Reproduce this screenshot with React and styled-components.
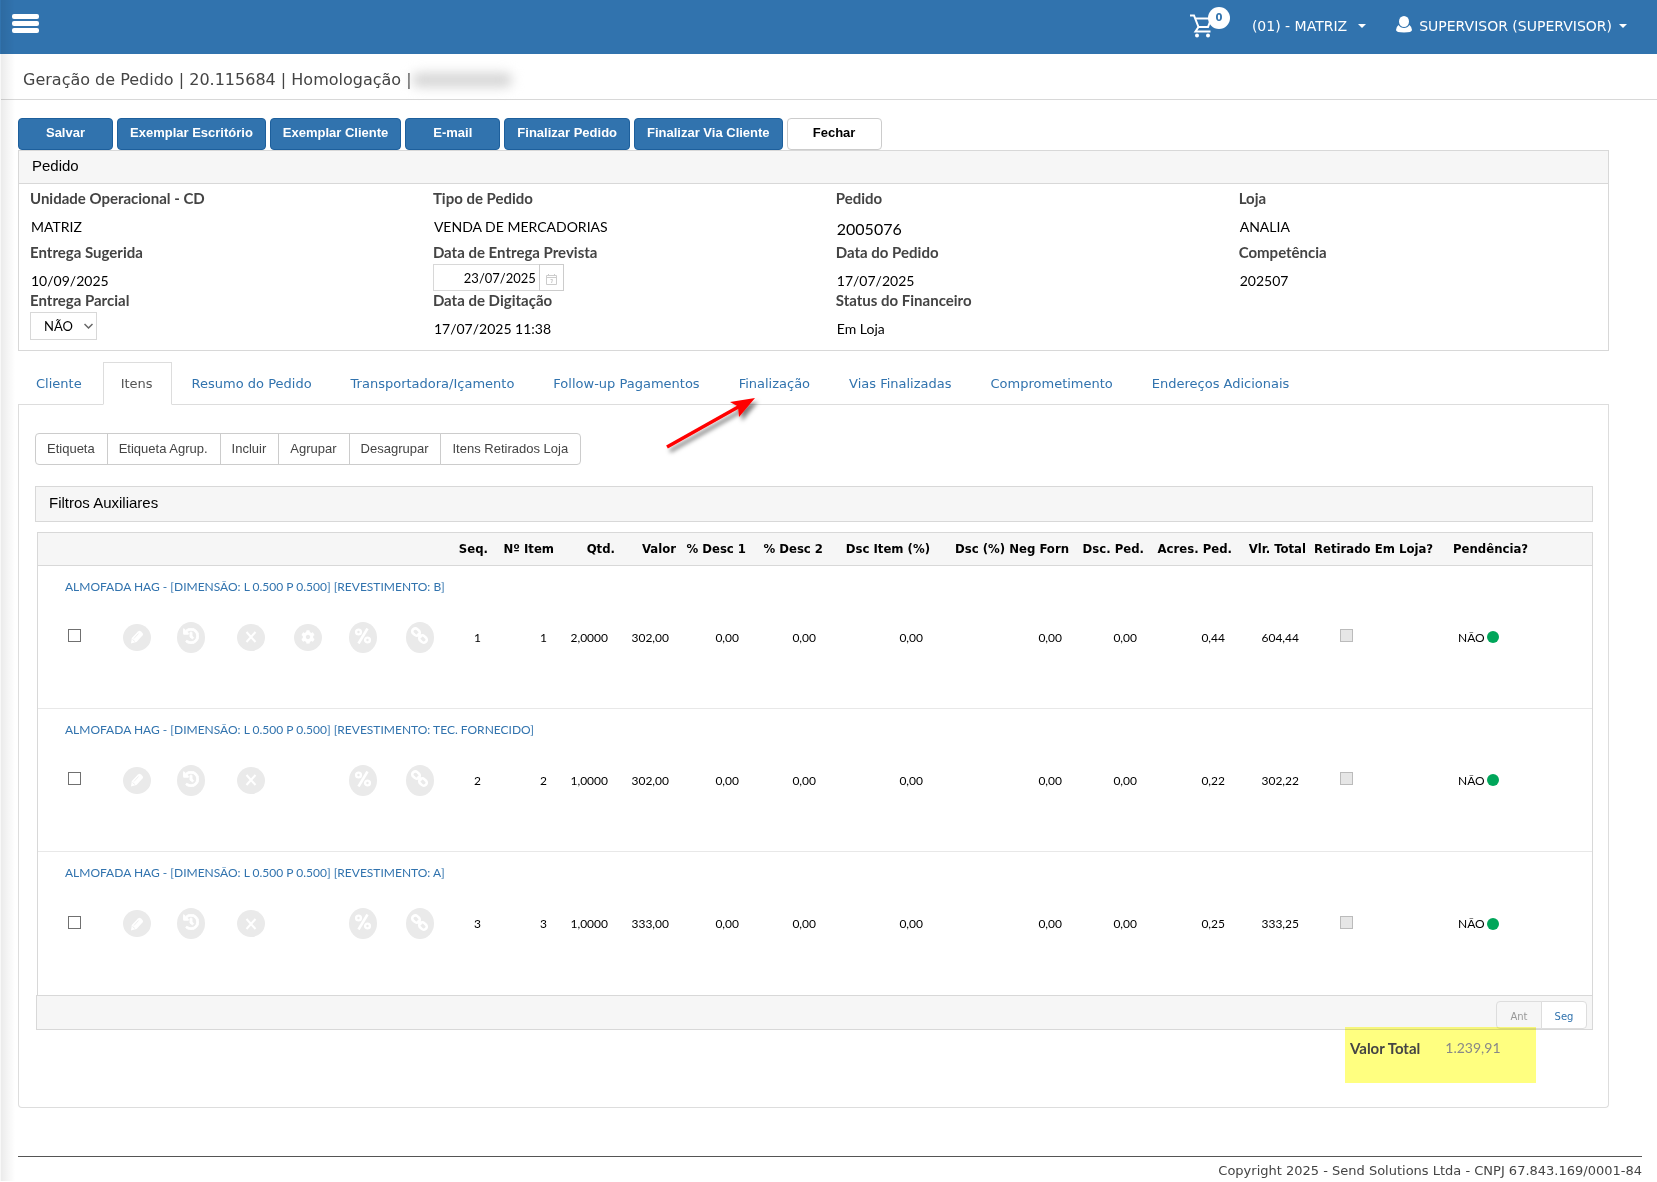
import React from 'react';
import styled, { createGlobalStyle } from 'styled-components';
import { FaHistory, FaCog } from 'react-icons/fa';

const VERDANA = '"DejaVu Sans", Verdana, sans-serif';
const TAHOMA = '"DejaVu Sans Condensed", Tahoma, sans-serif';
const ARIAL = '"Liberation Sans", Arial, sans-serif';
const TREBUCHET = 'Lato, "Trebuchet MS", sans-serif';

const GlobalStyle = createGlobalStyle`
    * {
        box-sizing: border-box;
    }
    body {
        margin: 0;
        background: #fff;
        color: #444;
        font-family: ${VERDANA};
        font-size: 13px;
    }
    button, input, select {
        font: inherit;
        margin: 0;
    }
    a {
        color: #3173ae;
        text-decoration: none;
    }
`;

const Page = styled.div`
    position: relative;
    border-left: 1px solid #f8f8f8;
`;

const SideShadow = styled.div`
    position: absolute;
    top: 0;
    bottom: 0;
    left: 0;
    width: 14px;
    background: linear-gradient(to right, rgba(0, 0, 0, 0.08), rgba(0, 0, 0, 0));
    pointer-events: none;
`;

const TopBar = styled.header`
    display: flex;
    align-items: center;
    justify-content: space-between;
    height: 54px;
    margin-left: -1px;
    padding: 0 30px 2px 12px;
    background: #3173ae;
    color: #fff;
    font-size: 14px;
`;

const MenuButton = styled.button`
    display: grid;
    gap: 2px;
    margin-bottom: 6px;
    padding: 0;
    border: 0;
    background: none;
`;

const MenuBar = styled.span`
    width: 27px;
    height: 5px;
    border-radius: 2px;
    background: #fff;
`;

const TopActions = styled.div`
    display: flex;
    align-items: center;
`;

const CartButton = styled.button`
    position: relative;
    height: 24px;
    margin-right: 40px;
    padding: 0;
    border: 0;
    background: none;
    color: #fff;
`;

const CartBadge = styled.span`
    position: absolute;
    top: -7px;
    left: 18px;
    width: 22px;
    height: 22px;
    border-radius: 50%;
    background: #fff;
    color: #3173ae;
    font-size: 10px;
    font-weight: bold;
    line-height: 21px;
    text-align: center;
`;

const TopMenu = styled.button`
    display: flex;
    align-items: center;
    gap: ${props => props.$gap};
    margin-right: ${props => props.$after ?? 0};
    padding: 0;
    border: 0;
    background: none;
    color: #fff;
`;

const Caret = styled.span`
    border: 4px solid transparent;
    border-top-color: #fff;
    border-bottom: 0;
`;

const TitleBar = styled.div`
    padding: 17px 23px 10px 22px;
    border-bottom: 1px solid #d8d8d8;
`;

const Title = styled.h1`
    display: flex;
    align-items: center;
    margin: 0;
    font-size: 16px;
    font-weight: normal;
    line-height: 18px;
`;

const Redacted = styled.span`
    width: 100px;
    height: 14px;
    border-radius: 6px;
    background: #d4d4d4;
    filter: blur(6px);
`;

const Main = styled.main`
    padding: 18px 48px 0 17px;
`;

const Toolbar = styled.div`
    display: flex;
    gap: 4px;
`;

const ActionButton = styled.button`
    min-width: 95px;
    height: 32px;
    padding: 0 12px 3px;
    border: 1px solid ${props => (props.$plain ? '#ccc' : '#1d5f9c')};
    border-radius: 4px;
    background: ${props => (props.$plain ? '#fff' : '#3173ae')};
    color: ${props => (props.$plain ? '#000' : '#fff')};
    font-family: ${ARIAL};
    font-weight: bold;
`;

const Panel = styled.section`
    border: 1px solid #d8d8d8;
`;

const PanelTitle = styled.h2`
    margin: 0;
    padding: 0 13px 2px;
    background: #f6f6f6;
    color: #000;
    font-family: ${ARIAL};
    font-size: 15px;
    font-weight: normal;
    line-height: 30px;
`;

const Fields = styled.div`
    display: grid;
    grid-template-columns: 12fr 12fr 12fr 11fr;
    grid-template-rows: 54px 48px 48px;
    padding: 4px 0 12px 11px;
    border-top: 1px solid #d8d8d8;
    font-family: ${TREBUCHET};
    font-size: 15px;
`;

const FieldLabel = styled.label`
    display: block;
    font-weight: bold;
    line-height: 20px;
`;

const FieldValue = styled.span`
    display: block;
    padding: 8px 1px 0;
    color: #000;
    font-size: ${props => (props.$big ? '16px' : '14px')};
    line-height: ${props => (props.$big ? '26px' : '22px')};
`;

const ControlGroup = styled.div`
    display: flex;
    height: 29px;
    padding-top: 2px;
`;

const DateInput = styled.input`
    width: 106px;
    padding: 0 3px;
    border: 1px solid #d8d8d8;
    border-right: 0;
    color: #000;
    font-size: 13px;
    text-align: right;
`;

const DateButton = styled.button`
    display: grid;
    place-items: center;
    width: 25px;
    padding: 4px 0 0;
    border: 1px solid #ccc;
    background: #fff;
`;

const SelectBox = styled.div`
    position: relative;
    width: 67px;
    height: 30px;
    padding-top: 2px;

    svg {
        position: absolute;
        top: 12px;
        right: 4px;
        pointer-events: none;
    }
`;

const Select = styled.select`
    appearance: none;
    width: 100%;
    height: 100%;
    padding: 0 13px;
    border: 1px solid #d8d8d8;
    border-radius: 0;
    background: #fff;
    color: #000;
    font-size: 13px;
`;

const Tabs = styled.nav`
    display: flex;
    margin-top: 11px;
    border-bottom: 1px solid #ddd;
`;

const Tab = styled.a`
    position: relative;
    height: 43px;
    margin: 0 2px -1px 0;
    padding: 0 18px 0 17px;
    border: 1px solid transparent;
    line-height: 42px;
    white-space: nowrap;
    ${props => props.$active && `
        border-color: #ddd #ddd #fff;
        background: #fff;
        color: #555;
    `}
`;

const Arrow = styled.svg`
    position: absolute;
    top: 29px;
    left: -62px;
    z-index: 1;
    overflow: visible;
`;

const TabContent = styled.section`
    padding: 28px 15px 24px 16px;
    border: 1px solid #ddd;
    border-top: 0;
    border-radius: 0 0 4px 4px;
`;

const ButtonGroup = styled.div`
    display: flex;
    margin-bottom: 21px;
`;

const GroupButton = styled.button`
    height: 32px;
    margin-right: -1px;
    padding: 0 12px 1px 11px;
    border: 1px solid #ccc;
    background: #fff;
    color: #444;
    font-family: ${ARIAL};

    &:first-child {
        border-radius: 4px 0 0 4px;
    }
    &:last-child {
        border-radius: 0 4px 4px 0;
    }
`;

const FilterTitle = styled(PanelTitle)`
    margin-bottom: 10px;
    border: 1px solid #d8d8d8;
    line-height: 32px;
`;

const TableFrame = styled.div`
    margin-left: 2px;
    border: 1px solid #d8d8d8;
    border-bottom: 0;
`;

const Table = styled.table`
    width: 100%;
    table-layout: fixed;
    border-spacing: 0;
    color: #000;
`;

const Col = styled.col`
    width: ${props => props.$width ?? 'auto'};
`;

const HeadCell = styled.th`
    height: 33px;
    padding: 0 0 2px ${props => props.$indent ?? 0};
    border-bottom: 1px solid #d8d8d8;
    background: #f6f6f6;
    font-family: ${TAHOMA};
    font-size: 13px;
    text-align: ${props => (props.$indent ? 'left' : 'right')};
    white-space: nowrap;
`;

const ItemTitleCell = styled.td`
    height: 44px;
    padding: 0 27px 3px;
    font-family: ${TREBUCHET};
    font-size: 12px;
`;

const ItemCell = styled.td`
    height: 99px;
    padding: 0 7px 44px ${props => props.$indent ?? 0};
    border-bottom: 1px solid #e8e8e8;
    font-family: ${TREBUCHET};
    font-size: 12px;
    text-align: ${props => (props.$indent ? 'left' : 'right')};

    tbody tr:last-child > & {
        border-bottom: 0;
    }
`;

const IconCell = styled(ItemCell)`
    padding: 0 1px 44px 0;
    text-align: center;
`;

const CheckBox = styled.input`
    appearance: none;
    display: block;
    width: 13px;
    height: 13px;
    margin-bottom: 3px;
    border: 1px solid #707070;
    background: #fff;

    &:checked {
        background: #3173ae;
    }
    &:disabled {
        border-color: #bbb;
        background: #e6e6e6;
    }
`;

const RoundButton = styled.button`
    display: inline-grid;
    place-items: center;
    width: 28px;
    height: ${props => (props.$tall ? '31px' : '27px')};
    padding: 0 0 ${props => (props.$tall ? '3px' : '0')};
    border: 0;
    border-radius: 50%;
    background: #eaeaea;
    color: #fff;
    vertical-align: middle;
`;

const Status = styled.span`
    display: flex;
    align-items: center;
    gap: 2px;
`;

const Dot = styled.span`
    width: 12px;
    height: 12px;
    border-radius: 50%;
    background: #00a65a;
`;

const Pager = styled.div`
    display: flex;
    justify-content: flex-end;
    height: 35px;
    margin-left: 1px;
    padding: 5px 5px 0;
    border: 1px solid #d8d8d8;
    background: #f6f6f6;
`;

const PageButton = styled.button`
    width: 46px;
    margin-left: -1px;
    padding: 3px 0 0;
    border: 1px solid #ddd;
    background: #fff;
    color: #3173ae;
    font-size: 10px;

    &:first-child {
        border-radius: 4px 0 0 4px;
    }
    &:last-child {
        border-radius: 0 4px 4px 0;
    }
    &:disabled {
        background: #f6f6f6;
        color: #999;
    }
`;

const Total = styled.div`
    display: flex;
    gap: 25px;
    width: 191px;
    height: 56px;
    margin: -3px 57px 0 auto;
    padding: 11px 5px;
    background: #ffff80;
    font-family: ${TREBUCHET};
    font-size: 15px;
    line-height: 20px;
    mix-blend-mode: multiply;
`;

const TotalValue = styled.span`
    color: #888;
    font-size: 14px;
`;

const Footer = styled.footer`
    margin: 48px 15px 0 17px;
    padding-top: 4px;
    border-top: 1px solid #555;
    line-height: 20px;
    text-align: right;
`;

const CartIcon = () => (
    <svg width="22" height="24" viewBox="0 0 22 24" fill="none" stroke="currentColor" strokeWidth="2">
        <path d="M0 1.500h4l4.500 11.500h9.500L21 5" />
        <path d="M5.500 4.500h14" />
        <path d="M8.500 13l-3 4.500h15" />
        <circle cx="7" cy="21.500" r="2" fill="currentColor" stroke="none" />
        <circle cx="18" cy="21.500" r="2" fill="currentColor" stroke="none" />
    </svg>
);

const UserIcon = () => (
    <svg width="16" height="20" viewBox="0 0 16 20" fill="currentColor">
        <ellipse cx="8" cy="5.500" rx="5" ry="5.500" />
        <path d="M2.500 9Q0 11 0 14q0 2.500 8 2.500t8-2.500q0-3-2.500-5-2 3-5.500 3t-5.500-3z" />
    </svg>
);

const CalendarIcon = () => (
    <svg width="11" height="11" viewBox="0 0 11 11" fill="none" stroke="#ccc">
        <path d="M.5 1.500h10v9H.5zM.5 3.500h10M2.500 0v2M8.500 0v2M4.500 5.500h2L5.500 9" />
    </svg>
);

const ChevronIcon = () => (
    <svg width="9" height="8" viewBox="0 0 9 8" fill="none" stroke="#666" strokeWidth="1.500">
        <path d="M.5 2l4 4 4-4" />
    </svg>
);

const PencilIcon = () => (
    <svg width="14" height="14" viewBox="0 0 14 14">
        <path d="M8 1.500Q9.500 .2 11 1.500l1.500 1.500q1.200 1.200 0 2.500L6.500 12 1 13.500 1.800 8z" fill="#fff" />
        <path d="M4 8.500l4.500-5M2.500 9.500l2.500 2" stroke="#eaeaea" fill="none" strokeWidth=".8" />
    </svg>
);

const CloseIcon = () => (
    <svg width="12" height="12" viewBox="0 0 12 12" stroke="#fff" strokeWidth="2">
        <path d="M1.500 1l9 10M10.500 1l-9 10" />
    </svg>
);

const PercentIcon = () => (
    <svg width="16" height="16" viewBox="0 0 16 16" fill="none" stroke="#fff">
        <circle cx="3.500" cy="4" r="2.400" strokeWidth="2.400" />
        <circle cx="12.500" cy="12" r="2.400" strokeWidth="2.400" />
        <path d="M12.500 .5l-9 15" strokeWidth="2.600" />
    </svg>
);

const LinkIcon = () => (
    <svg width="17" height="17" viewBox="0 0 17 17" fill="none" stroke="#fff" strokeWidth="2.600">
        <rect x="1" y="2" width="8" height="6" rx="3" transform="rotate(42 5 5)" />
        <rect x="8" y="9" width="8" height="6" rx="3" transform="rotate(42 12 12)" />
        <path d="M6.500 6.500l4 4" />
    </svg>
);

const fields = [
    { label: 'Unidade Operacional - CD', value: 'MATRIZ' },
    { label: 'Tipo de Pedido', value: 'VENDA DE MERCADORIAS' },
    { label: 'Pedido', value: '2005076', big: true },
    { label: 'Loja', value: 'ANALIA' },
    { label: 'Entrega Sugerida', value: '10/09/2025' },
    { label: 'Data de Entrega Prevista', value: '23/07/2025', type: 'date' },
    { label: 'Data do Pedido', value: '17/07/2025' },
    { label: 'Competência', value: '202507' },
    { label: 'Entrega Parcial', value: 'NÃO', type: 'select' },
    { label: 'Data de Digitação', value: '17/07/2025 11:38' },
    { label: 'Status do Financeiro', value: 'Em Loja' },
];

const actions = ['Salvar', 'Exemplar Escritório', 'Exemplar Cliente', 'E-mail', 'Finalizar Pedido', 'Finalizar Via Cliente'];

const tabs = [
    'Cliente', 'Itens', 'Resumo do Pedido', 'Transportadora/Içamento', 'Follow-up Pagamentos',
    'Finalização', 'Vias Finalizadas', 'Comprometimento', 'Endereços Adicionais',
];

const itemActions = ['Etiqueta', 'Etiqueta Agrup.', 'Incluir', 'Agrupar', 'Desagrupar', 'Itens Retirados Loja'];

const iconWidths = ['72px', '54px', '54px', '67px', '47px', '62px', '52px'];

const columns = [
    { title: 'Seq.', width: '42px' },
    { title: 'Nº Item', width: '66px' },
    { title: 'Qtd.', width: '61px' },
    { title: 'Valor', width: '61px' },
    { title: '% Desc 1', width: '70px' },
    { title: '% Desc 2', width: '77px' },
    { title: 'Dsc Item (%)', width: '107px' },
    { title: 'Dsc (%) Neg Forn', width: '139px' },
    { title: 'Dsc. Ped.', width: '75px' },
    { title: 'Acres. Ped.', width: '88px' },
    { title: 'Vlr. Total', width: '74px' },
    { title: 'Retirado Em Loja?', width: '128px', indent: '8px' },
    { title: 'Pendência?', indent: '19px' },
];

const items = [
    {
        name: 'ALMOFADA HAG - [DIMENSÃO: L 0.500 P 0.500] [REVESTIMENTO: B]',
        configurable: true,
        values: ['1', '1', '2,0000', '302,00', '0,00', '0,00', '0,00', '0,00', '0,00', '0,44', '604,44'],
    },
    {
        name: 'ALMOFADA HAG - [DIMENSÃO: L 0.500 P 0.500] [REVESTIMENTO: TEC. FORNECIDO]',
        values: ['2', '2', '1,0000', '302,00', '0,00', '0,00', '0,00', '0,00', '0,00', '0,22', '302,22'],
    },
    {
        name: 'ALMOFADA HAG - [DIMENSÃO: L 0.500 P 0.500] [REVESTIMENTO: A]',
        values: ['3', '3', '1,0000', '333,00', '0,00', '0,00', '0,00', '0,00', '0,00', '0,25', '333,25'],
    },
];

const Field = ({ field, id }) => {
    if (field.type === 'date') {
        return (
            <div>
                <FieldLabel htmlFor={id}>{field.label}</FieldLabel>
                <ControlGroup>
                    <DateInput id={id} defaultValue={field.value} />
                    <DateButton type="button" aria-label="Calendário"><CalendarIcon /></DateButton>
                </ControlGroup>
            </div>
        );
    }
    if (field.type === 'select') {
        return (
            <div>
                <FieldLabel htmlFor={id}>{field.label}</FieldLabel>
                <SelectBox>
                    <Select id={id} defaultValue={field.value}>
                        <option>NÃO</option>
                        <option>SIM</option>
                    </Select>
                    <ChevronIcon />
                </SelectBox>
            </div>
        );
    }
    return (
        <div>
            <FieldLabel as="span">{field.label}</FieldLabel>
            <FieldValue $big={field.big}>{field.value}</FieldValue>
        </div>
    );
};

const ItemRows = ({ item }) => (
    <>
        <tr>
            <ItemTitleCell colSpan={20}><a href="#item">{item.name}</a></ItemTitleCell>
        </tr>
        <tr>
            <ItemCell $indent="30px"><CheckBox type="checkbox" aria-label="Selecionar item" /></ItemCell>
            <IconCell><RoundButton aria-label="Editar"><PencilIcon /></RoundButton></IconCell>
            <IconCell><RoundButton $tall aria-label="Histórico"><FaHistory size={16} strokeWidth={30} stroke="#fff" /></RoundButton></IconCell>
            <IconCell><RoundButton aria-label="Excluir"><CloseIcon /></RoundButton></IconCell>
            <IconCell>
                {item.configurable && <RoundButton aria-label="Configurar"><FaCog size={14} /></RoundButton>}
            </IconCell>
            <IconCell><RoundButton $tall aria-label="Desconto"><PercentIcon /></RoundButton></IconCell>
            <IconCell><RoundButton $tall aria-label="Vincular"><LinkIcon /></RoundButton></IconCell>
            {item.values.map((value, index) => <ItemCell key={index}>{value}</ItemCell>)}
            <ItemCell $indent="34px"><CheckBox type="checkbox" disabled aria-label="Retirado em loja" /></ItemCell>
            <ItemCell $indent="24px"><Status>NÃO <Dot /></Status></ItemCell>
        </tr>
    </>
);

const ItemsTable = () => (
    <TableFrame>
        <Table>
            <colgroup>
                {iconWidths.map((width, index) => <Col key={index} $width={width} />)}
                {columns.map(column => <Col key={column.title} $width={column.width} />)}
            </colgroup>
            <thead>
                <tr>
                    <HeadCell as="td" colSpan={7} />
                    {columns.map(column => (
                        <HeadCell key={column.title} $indent={column.indent}>{column.title}</HeadCell>
                    ))}
                </tr>
            </thead>
            <tbody>
                {items.map(item => <ItemRows key={item.name} item={item} />)}
            </tbody>
        </Table>
    </TableFrame>
);

const PointerArrow = () => (
    <Arrow width="100" height="60" viewBox="0 0 100 60" aria-hidden="true">
        <defs>
            <filter id="arrow-shadow" x="-20%" y="-20%" width="150%" height="160%">
                <feDropShadow dx="3" dy="4" stdDeviation="2" floodColor="#000" floodOpacity="0.5" />
            </filter>
        </defs>
        <g filter="url(#arrow-shadow)">
            <path d="M7 55L80 14" stroke="#f00" strokeWidth="3.500" />
            <path d="M95 6L70 10l8 4.500L79 25z" fill="#f00" />
        </g>
    </Arrow>
);

const App = () => (
    <Page>
        <GlobalStyle />
        <TopBar>
            <MenuButton aria-label="Menu">
                <MenuBar />
                <MenuBar />
                <MenuBar />
            </MenuButton>
            <TopActions>
                <CartButton aria-label="Carrinho">
                    <CartIcon />
                    <CartBadge>0</CartBadge>
                </CartButton>
                <TopMenu $gap="11px" $after="30px">(01) - MATRIZ <Caret /></TopMenu>
                <TopMenu $gap="7px"><UserIcon /> SUPERVISOR (SUPERVISOR) <Caret /></TopMenu>
            </TopActions>
        </TopBar>
        <TitleBar>
            <Title>Geração de Pedido | 20.115684 | Homologação |<Redacted /></Title>
        </TitleBar>
        <Main>
            <Toolbar>
                {actions.map(action => <ActionButton key={action}>{action}</ActionButton>)}
                <ActionButton $plain>Fechar</ActionButton>
            </Toolbar>
            <Panel>
                <PanelTitle>Pedido</PanelTitle>
                <Fields>
                    {fields.map((field, index) => <Field key={field.label} field={field} id={`field-${index}`} />)}
                </Fields>
            </Panel>
            <Tabs>
                {tabs.map(tab => (
                    <Tab key={tab} href="#tab" $active={tab === 'Itens'}>
                        {tab}
                        {tab === 'Finalização' && <PointerArrow />}
                    </Tab>
                ))}
            </Tabs>
            <TabContent>
                <ButtonGroup>
                    {itemActions.map(action => <GroupButton key={action}>{action}</GroupButton>)}
                </ButtonGroup>
                <FilterTitle>Filtros Auxiliares</FilterTitle>
                <ItemsTable />
                <Pager>
                    <PageButton disabled>Ant</PageButton>
                    <PageButton>Seg</PageButton>
                </Pager>
                <Total>
                    <b>Valor Total</b>
                    <TotalValue>1.239,91</TotalValue>
                </Total>
            </TabContent>
        </Main>
        <Footer>Copyright 2025 - Send Solutions Ltda - CNPJ 67.843.169/0001-84</Footer>
        <SideShadow />
    </Page>
);

export default App;
